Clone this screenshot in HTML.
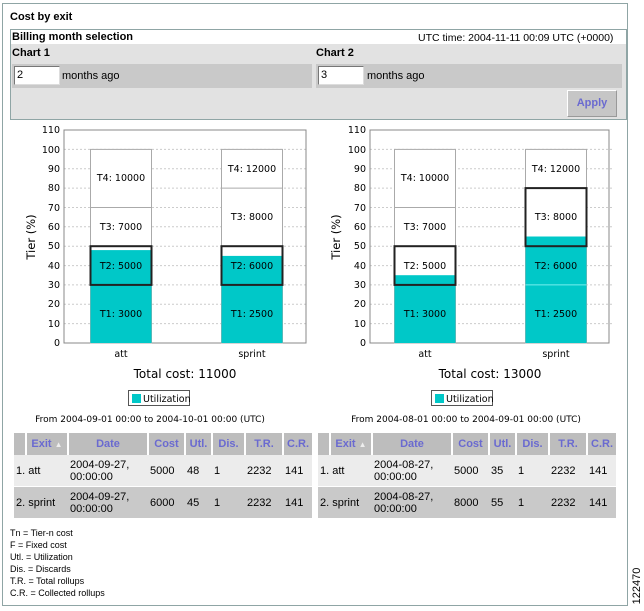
<!DOCTYPE html>
<html><head><meta charset="utf-8"><style>
body{margin:0;width:644px;height:609px;background:#fff;font-family:"Liberation Sans",Arial,sans-serif;font-size:11px;color:#000;position:relative;overflow:hidden}
.a{position:absolute}
table{border-collapse:collapse;position:absolute;font-size:11px;table-layout:fixed}
td,th{padding:0 2px;text-align:left;font-weight:normal;white-space:nowrap;overflow:hidden}
th{color:#6a6ad0;font-weight:bold;text-align:center;background:#bdbdbd;border-left:2px solid #fff;height:22px;padding:0}
.r1 td{background:#ececec;height:31px}
.r2 td{background:#c9c9c9;height:31px;border-top:1px solid #fff}
</style></head><body>
<div class="a" style="left:2px;top:3px;width:624px;height:601px;border:1px solid #8fa5a5"></div>
<div class="a" style="left:10px;top:11px;font-weight:bold">Cost by exit</div>
<div class="a" style="left:10px;top:29px;width:615px;height:89px;border:1px solid #8fa5a5;background:#e2e2e2"></div>
<div class="a" style="left:11px;top:30px;width:615px;height:14px;background:#fff"></div>
<div class="a" style="left:12px;top:31px;font-weight:bold">Billing month selection</div>
<div class="a" style="left:418px;top:32px;font-size:10.5px">UTC time: 2004-11-11 00:09 UTC (+0000)</div>
<div class="a" style="left:12px;top:47px;font-weight:bold">Chart 1</div>
<div class="a" style="left:316px;top:47px;font-weight:bold">Chart 2</div>
<div class="a" style="left:12px;top:64px;width:300px;height:24px;background:#c9c9c9"></div>
<div class="a" style="left:316px;top:64px;width:306px;height:24px;background:#c9c9c9"></div>
<div class="a" style="left:14px;top:66px;background:#fff;border:1px solid #777;border-right-color:#ddd;border-bottom-color:#ddd;line-height:17px;padding-left:2px;box-sizing:border-box;width:46px;height:19px">2</div>
<div class="a" style="left:62px;top:70px">months ago</div>
<div class="a" style="left:318px;top:66px;background:#fff;border:1px solid #777;border-right-color:#ddd;border-bottom-color:#ddd;line-height:17px;padding-left:2px;box-sizing:border-box;width:46px;height:19px">3</div>
<div class="a" style="left:367px;top:70px">months ago</div>
<div class="a" style="left:567px;top:90px;width:48px;height:25px;background:#c6c6c6;border:1px solid #999;border-top-color:#fff;border-left-color:#fff;color:#6a6ad0;font-weight:bold;text-align:center;line-height:25px">Apply</div>

<svg class="a" style="left:0;top:0" width="644" height="440" font-family="DejaVu Sans,sans-serif" font-size="9.5">
<defs><g id="grid" stroke="#ccc" stroke-dasharray="2,2"><line x1="0" x2="242" y1="323.6" y2="323.6"/><line x1="0" x2="242" y1="304.3" y2="304.3"/><line x1="0" x2="242" y1="284.9" y2="284.9"/><line x1="0" x2="242" y1="265.6" y2="265.6"/><line x1="0" x2="242" y1="246.2" y2="246.2"/><line x1="0" x2="242" y1="226.8" y2="226.8"/><line x1="0" x2="242" y1="207.5" y2="207.5"/><line x1="0" x2="242" y1="188.1" y2="188.1"/><line x1="0" x2="242" y1="168.8" y2="168.8"/><line x1="0" x2="242" y1="149.4" y2="149.4"/></g>
<g id="ticks" text-anchor="end" fill="#000"><text x="-4" y="346">0</text><text x="-4" y="327">10</text><text x="-4" y="307">20</text><text x="-4" y="288">30</text><text x="-4" y="269">40</text><text x="-4" y="249">50</text><text x="-4" y="230">60</text><text x="-4" y="211">70</text><text x="-4" y="191">80</text><text x="-4" y="172">90</text><text x="-4" y="153">100</text><text x="-4" y="133">110</text></g></defs>
<g transform="translate(64,0)"><use href="#grid"/><use href="#ticks"/><rect x="0" y="130" width="242" height="213" fill="none" stroke="#888"/></g>
<text transform="translate(35,237) rotate(-90)" text-anchor="middle" font-size="11.5">Tier (%)</text>
<g stroke="#aaa" fill="#fff"><rect x="90.5" y="149.4" width="61" height="193.6"/><rect x="221.5" y="149.4" width="61" height="193.6"/><line x1="90.5" x2="151.5" y1="207.5" y2="207.5"/><line x1="221.5" x2="282.5" y1="188.1" y2="188.1"/></g>
<rect x="90.5" y="250.1" width="61" height="92.9" fill="#00c8c8"/><rect x="221.5" y="255.9" width="61" height="87.1" fill="#00c8c8"/>
<g fill="none" stroke="#222" stroke-width="2"><rect x="90.5" y="246.2" width="61" height="38.7"/><rect x="221.5" y="246.2" width="61" height="38.7"/></g>
<g text-anchor="middle"><text x="121" y="181">T4: 10000</text><text x="121" y="230">T3: 7000</text><text x="121" y="269">T2: 5000</text><text x="121" y="317">T1: 3000</text>
<text x="252" y="172">T4: 12000</text><text x="252" y="220">T3: 8000</text><text x="252" y="269">T2: 6000</text><text x="252" y="317">T1: 2500</text>
<text x="121" y="357">att</text><text x="252" y="357">sprint</text><text x="185" y="378" font-size="12">Total cost: 11000</text>
<text x="150" y="422" font-size="9">From 2004-09-01 00:00 to 2004-10-01 00:00 (UTC)</text></g>
<rect x="128.5" y="390.5" width="61" height="15" fill="#fff" stroke="#555"/><rect x="132" y="394" width="9" height="9" fill="#00c8c8"/><text x="143" y="402">Utilization</text>
<g transform="translate(370,0)"><use href="#grid"/><use href="#ticks"/><rect x="0" y="130" width="239" height="213" fill="none" stroke="#888"/></g>
<text transform="translate(340,237) rotate(-90)" text-anchor="middle" font-size="11.5">Tier (%)</text>
<g stroke="#aaa" fill="#fff"><rect x="394.5" y="149.4" width="61" height="193.6"/><rect x="525.5" y="149.4" width="61" height="193.6"/><line x1="394.5" x2="455.5" y1="207.5" y2="207.5"/></g>
<rect x="394.5" y="275.2" width="61" height="67.8" fill="#00c8c8"/><rect x="525.5" y="236.5" width="61" height="106.5" fill="#00c8c8"/><line x1="525.5" x2="586.5" y1="284.9" y2="284.9" stroke="#7ee"/>
<g fill="none" stroke="#222" stroke-width="2"><rect x="394.5" y="246.2" width="61" height="38.7"/><rect x="525.5" y="188.1" width="61" height="58.1"/></g>
<g text-anchor="middle"><text x="425" y="181">T4: 10000</text><text x="425" y="230">T3: 7000</text><text x="425" y="269">T2: 5000</text><text x="425" y="317">T1: 3000</text>
<text x="556" y="172">T4: 12000</text><text x="556" y="220">T3: 8000</text><text x="556" y="269">T2: 6000</text><text x="556" y="317">T1: 2500</text>
<text x="425" y="357">att</text><text x="556" y="357">sprint</text><text x="490" y="378" font-size="12">Total cost: 13000</text>
<text x="466" y="422" font-size="9">From 2004-08-01 00:00 to 2004-09-01 00:00 (UTC)</text></g>
<rect x="431.5" y="390.5" width="61" height="15" fill="#fff" stroke="#555"/><rect x="435" y="394" width="9" height="9" fill="#00c8c8"/><text x="446" y="402">Utilization</text>
</svg>

<table style="left:14px;top:433px;width:298px">
<colgroup><col style="width:12px"><col style="width:42px"><col style="width:80px"><col style="width:37px"><col style="width:27px"><col style="width:33px"><col style="width:38px"><col style="width:29px"></colgroup>
<tr><th style="border-left:0"></th><th>Exit <span style="color:#eee;font-size:8px">▲</span></th><th>Date</th><th>Cost</th><th>Utl.</th><th>Dis.</th><th>T.R.</th><th>C.R.</th></tr>
<tr class="r1"><td colspan="2">1. att</td><td>2004-09-27,<br>00:00:00</td><td>5000</td><td>48</td><td>1</td><td>2232</td><td>141</td></tr>
<tr class="r2"><td colspan="2">2. sprint</td><td>2004-09-27,<br>00:00:00</td><td>6000</td><td>45</td><td>1</td><td>2232</td><td>141</td></tr>
</table>
<table style="left:318px;top:433px;width:298px">
<colgroup><col style="width:12px"><col style="width:42px"><col style="width:80px"><col style="width:37px"><col style="width:27px"><col style="width:33px"><col style="width:38px"><col style="width:29px"></colgroup>
<tr><th style="border-left:0"></th><th>Exit <span style="color:#eee;font-size:8px">▲</span></th><th>Date</th><th>Cost</th><th>Utl.</th><th>Dis.</th><th>T.R.</th><th>C.R.</th></tr>
<tr class="r1"><td colspan="2">1. att</td><td>2004-08-27,<br>00:00:00</td><td>5000</td><td>35</td><td>1</td><td>2232</td><td>141</td></tr>
<tr class="r2"><td colspan="2">2. sprint</td><td>2004-08-27,<br>00:00:00</td><td>8000</td><td>55</td><td>1</td><td>2232</td><td>141</td></tr>
</table>
<div class="a" style="left:10px;top:527px;font-size:9px;line-height:12px">Tn = Tier-n cost<br>F = Fixed cost<br>Utl. = Utilization<br>Dis. = Discards<br>T.R. = Total rollups<br>C.R. = Collected rollups</div>
<div class="a" style="left:612px;top:580px;transform:rotate(-90deg);font-size:11px;width:50px;text-align:center">122470</div>
</body></html>
